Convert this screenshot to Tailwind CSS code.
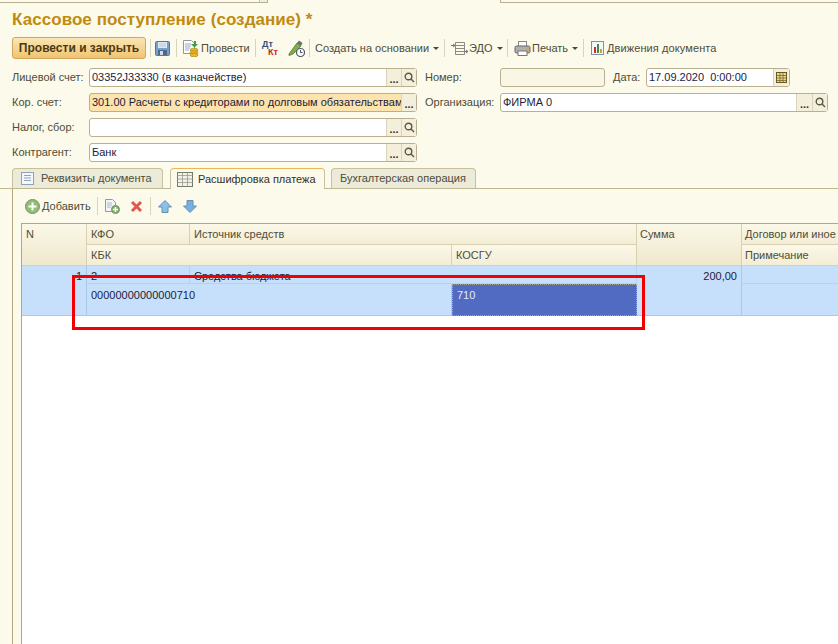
<!DOCTYPE html>
<html lang="ru">
<head>
  <meta charset="UTF-8" />
  <title>Кассовое поступление</title>
  <script src="https://cdn.jsdelivr.net/npm/@tailwindcss/browser@4"></script>
</head>
<body class="bg-[#fcfaea] h-[644px] w-[838px] overflow-hidden relative font-['Liberation_Sans',Arial,sans-serif] text-[11px] text-[#4f4c38]">

  <!-- Top strip -->
  <div class="h-[12px] flex">
    <div class="w-[268px] h-[3px] border-b border-r border-[#b8b090] flex justify-end">
      <div class="w-[8px] h-[2px] border-l border-[#c8c4ac] bg-[#f0eedd]"></div>
    </div>
    <div class="w-[232px]"></div>
    <div class="flex-1 h-[3px] border-b border-l border-[#b8b090]"></div>
  </div>

  <!-- Title -->
  <h1 class="pl-[12px] h-[24px] leading-[16px] text-[17px] tracking-[0.06px] font-bold text-[#c08a10]">Кассовое поступление (создание) *</h1>

  <!-- Command bar -->
  <div class="h-[24px] pl-[12px] flex items-center whitespace-nowrap">
    <button class="h-[22px] w-[134px] rounded-[3px] border border-[#d2a860] bg-gradient-to-b from-[#fbe6b4] to-[#f0c470] font-bold text-[12px] text-[#4b3a10]">Провести и закрыть</button>
    <div class="w-px h-[18px] bg-[#d8d4bc] ml-[4px] mr-[4px]"></div>
    <svg class="w-[15px] h-[15px]" viewBox="0 0 15 15"><rect x=".5" y=".5" width="14" height="14" rx="1" fill="#7b9fc8" stroke="#56789c"/><rect x="3" y="1" width="9" height="6" fill="#dfe8f2"/><path d="M4 3h7M4 5h7" stroke="#a9bdd2" stroke-width=".7"/><rect x="3" y="9" width="9" height="5" fill="#4a6a8a"/><rect x="5" y="10" width="3" height="4" fill="#cfdbe8"/></svg>
    <div class="w-px h-[18px] bg-[#d8d4bc] ml-[6px] mr-[6px]"></div>
    <svg class="w-[16px] h-[17px]" viewBox="0 0 16 17"><path d="M.5.5h8l3 3v10h-11z" fill="#fff" stroke="#8a9aa8"/><path d="M2 4h6M2 6h6M2 8h5M2 10h4" stroke="#9ab"/><path d="M8 4h3V1h2v3h2l-3.500 3.500z" fill="#3f9e3f"/><ellipse cx="11" cy="10" rx="4" ry="1.800" fill="#e8b82a" stroke="#a67c10" stroke-width=".6"/><ellipse cx="11" cy="12.500" rx="4" ry="1.800" fill="#e8b82a" stroke="#a67c10" stroke-width=".6"/><ellipse cx="11" cy="15" rx="4" ry="1.800" fill="#e8b82a" stroke="#a67c10" stroke-width=".6"/></svg>
    <span class="ml-[2px] w-[49px]">Провести</span>
    <div class="w-px h-[18px] bg-[#d8d4bc] ml-[5px] mr-[6px]"></div>
    <div class="w-[17px] h-[17px] relative font-bold text-[9px] leading-[9px]">
      <span class="absolute left-0 top-0 text-[#33517a]">Дт</span>
      <span class="absolute left-[6px] top-[8px] text-[#d01818]">Кт</span>
    </div>
    <svg class="w-[17px] h-[17px] ml-[9px]" viewBox="0 0 17 17"><path d="M1 14 9 3l4 3-8 8-4 1.500z" fill="#7fae4e" stroke="#4f7432" stroke-width=".8"/><path d="M9 3l2-2.500 3.500 2.500-1.500 3z" fill="#6e6e6e"/><circle cx="12.500" cy="12.500" r="4" fill="#fff" stroke="#4e5a66" stroke-width="1.200"/><path d="M12.500 10v2.500h2" fill="none" stroke="#33404a" stroke-width=".9"/></svg>
    <div class="w-px h-[18px] bg-[#d8d4bc] ml-[4px] mr-[5px]"></div>
    <span class="w-[113px]">Создать на основании</span>
    <span class="w-0 h-0 ml-[5px] border-x-[3px] border-t-[3px] border-x-transparent border-t-[#4a4a3a]"></span>
    <div class="w-px h-[18px] bg-[#d8d4bc] ml-[5px] mr-[6px]"></div>
    <svg class="w-[17px] h-[15px]" viewBox="0 0 17 15" fill="none" stroke="#8a8a80"><path d="M4.500 1.500h9v12h-9zM4.500 4.500h9M4.500 7.500h9M4.500 10.500h9"/><path d="M0 4.500h4M2 3l2 1.500L2 6M13 10.500h4M15 9l2 1.500-2 1.500" stroke="#777"/></svg>
    <span class="ml-[1px] w-[24px]">ЭДО</span>
    <span class="w-0 h-0 ml-[4px] border-x-[3px] border-t-[3px] border-x-transparent border-t-[#4a4a3a]"></span>
    <div class="w-px h-[18px] bg-[#d8d4bc] ml-[4px] mr-[6px]"></div>
    <svg class="w-[17px] h-[15px]" viewBox="0 0 16 15"><rect x="4" y=".5" width="8" height="5" fill="#fff" stroke="#888"/><rect x=".5" y="5" width="15" height="7" rx="1.500" fill="#b0b0ac" stroke="#666"/><rect x="3.500" y="10" width="9" height="4.500" fill="#fff" stroke="#777"/><rect x="12" y="6.500" width="2" height="1.500" fill="#e8a030"/></svg>
    <span class="ml-[1px] w-[38px]">Печать</span>
    <span class="w-0 h-0 ml-[2px] border-x-[3px] border-t-[3px] border-x-transparent border-t-[#4a4a3a]"></span>
    <div class="w-px h-[18px] bg-[#d8d4bc] ml-[5px] mr-[7px]"></div>
    <svg class="w-[13px] h-[14px]" viewBox="0 0 13 14"><rect x=".5" y=".5" width="12" height="13" fill="#f4f7fb" stroke="#7d93ad"/><rect x="3" y="6" width="2" height="6" fill="#c83030"/><rect x="6" y="3" width="2" height="9" fill="#3f8f3f"/><rect x="9" y="8" width="2" height="4" fill="#d9a020"/></svg>
    <span class="ml-[3px] tracking-[0.1px]">Движения документа</span>
  </div>

  <!-- Form -->
  <div class="mt-[8px] pl-[12px] grid grid-cols-[77px_328px_83px_1fr] gap-y-[6px] h-[94px] whitespace-nowrap">
    <div class="h-[19px] leading-[19px]">Лицевой счет:</div>
    <div class="h-[19px] rounded-[3px] border border-[#b8b090] bg-white flex">
      <div class="flex-1 pl-[2px] leading-[17px] text-[#1c1c3a]">03352J33330 (в казначействе)</div>
      <div class="w-[15px] border-l border-[#d8d4bc] bg-[#f3efdb] text-center text-[#333] leading-[20px] font-bold">...</div>
      <div class="w-[15px] border-l border-[#d8d4bc] bg-[#f3efdb] flex items-center justify-center">
        <svg class="w-[11px] h-[11px]" viewBox="0 0 11 11" fill="none" stroke="#5a5a48" stroke-width="1.400"><circle cx="4.500" cy="4.500" r="3.300"/><path d="M7 7l3 3"/></svg>
      </div>
    </div>
    <div class="h-[19px] leading-[19px] pl-[8px]">Номер:</div>
    <div class="flex items-start">
      <div class="w-[105px] h-[19px] rounded-[3px] border border-[#b8b090] bg-[#f9f7e4]"></div>
      <div class="w-[41px] pl-[8px] leading-[19px]">Дата:</div>
      <div class="w-[144px] h-[19px] rounded-[3px] border border-[#b8b090] bg-white flex">
        <div class="flex-1 pl-[2px] leading-[17px] text-[#1c1c3a]">17.09.2020 &nbsp;0:00:00</div>
        <div class="w-[16px] border-l border-[#d8d4bc] bg-[#f3efdb] flex items-center justify-center">
          <svg class="w-[11px] h-[11px]" viewBox="0 0 11 11"><rect x=".5" y=".5" width="10" height="10" fill="#e8d890" stroke="#6a5a20"/><path d="M.5 3.500h10M.5 6h10M.5 8.500h10M4 .5v10M7 .5v10" stroke="#6a5a20" stroke-width=".7"/></svg>
        </div>
      </div>
    </div>

    <div class="h-[19px] leading-[19px]">Кор. счет:</div>
    <div class="h-[19px] rounded-[3px] border border-[#b8b090] bg-[#fde3ae] flex">
      <div class="flex-1 pl-[2px] leading-[17px] text-[#1c1c3a] overflow-hidden">301.00 Расчеты с кредиторами по долговым обязательствам</div>
      <div class="w-[15px] border-l border-[#d8d4bc] bg-[#f3efdb] text-center text-[#333] leading-[20px] font-bold">...</div>
    </div>
    <div class="h-[19px] leading-[19px] pl-[8px]">Организация:</div>
    <div class="w-[328px] h-[19px] rounded-[3px] border border-[#b8b090] bg-white flex">
      <div class="flex-1 pl-[2px] leading-[17px] text-[#1c1c3a]">ФИРМА 0</div>
      <div class="w-[16px] border-l border-[#d8d4bc] bg-[#f3efdb] text-center text-[#333] leading-[20px] font-bold">...</div>
      <div class="w-[15px] border-l border-[#d8d4bc] bg-[#f3efdb] flex items-center justify-center">
        <svg class="w-[11px] h-[11px]" viewBox="0 0 11 11" fill="none" stroke="#5a5a48" stroke-width="1.400"><circle cx="4.500" cy="4.500" r="3.300"/><path d="M7 7l3 3"/></svg>
      </div>
    </div>

    <div class="h-[19px] leading-[19px]">Налог, сбор:</div>
    <div class="h-[19px] rounded-[3px] border border-[#b8b090] bg-white flex">
      <div class="flex-1"></div>
      <div class="w-[15px] border-l border-[#d8d4bc] bg-[#f3efdb] text-center text-[#333] leading-[20px] font-bold">...</div>
      <div class="w-[15px] border-l border-[#d8d4bc] bg-[#f3efdb] flex items-center justify-center">
        <svg class="w-[11px] h-[11px]" viewBox="0 0 11 11" fill="none" stroke="#5a5a48" stroke-width="1.400"><circle cx="4.500" cy="4.500" r="3.300"/><path d="M7 7l3 3"/></svg>
      </div>
    </div>
    <div class="col-span-2"></div>

    <div class="h-[19px] leading-[19px]">Контрагент:</div>
    <div class="h-[19px] rounded-[3px] border border-[#b8b090] bg-white flex">
      <div class="flex-1 pl-[2px] leading-[17px] text-[#1c1c3a]">Банк</div>
      <div class="w-[15px] border-l border-[#d8d4bc] bg-[#f3efdb] text-center text-[#333] leading-[20px] font-bold">...</div>
      <div class="w-[15px] border-l border-[#d8d4bc] bg-[#f3efdb] flex items-center justify-center">
        <svg class="w-[11px] h-[11px]" viewBox="0 0 11 11" fill="none" stroke="#5a5a48" stroke-width="1.400"><circle cx="4.500" cy="4.500" r="3.300"/><path d="M7 7l3 3"/></svg>
      </div>
    </div>
    <div class="col-span-2"></div>
  </div>

  <!-- Tabs -->
  <div class="mt-[6px] pl-[12px] h-[21px] flex items-end border-b border-[#c0b890] whitespace-nowrap">
    <div class="w-[151px] h-[20px] rounded-t-[4px] border border-b-0 border-[#c8c09c] bg-[#ecead8] flex items-center pl-[8px]">
      <svg class="w-[13px] h-[13px]" viewBox="0 0 13 13"><rect x=".5" y=".5" width="12" height="12" fill="#f4f7fb" stroke="#8fa3b8"/><path d="M3 3.500h7M3 6h7M3 8.500h7" stroke="#8fa3b8"/></svg>
      <span class="ml-[7px]">Реквизиты документа</span>
    </div>
    <div class="ml-[7px] w-[155px] h-[21px] -mb-px rounded-t-[4px] border border-b-0 border-[#c8c09c] border-t-[#e8b858] bg-[#fcfaea] flex items-center pl-[6px] text-[#33322a]">
      <svg class="w-[16px] h-[15px]" viewBox="0 0 16 15"><rect x=".5" y=".5" width="15" height="14" fill="#f2f2ea" stroke="#77776a"/><path d="M.5 3.500h15M5.500.5v14M10.500.5v14M.5 7h15M.5 10.500h15" stroke="#9a9a8c" stroke-width=".8"/></svg>
      <span class="ml-[5px]">Расшифровка платежа</span>
    </div>
    <div class="ml-[6px] w-[145px] h-[20px] rounded-t-[4px] border border-b-0 border-[#c8c09c] bg-[#ecead8] flex items-center pl-[8px]">Бухгалтерская операция</div>
  </div>

  <!-- Tab panel -->
  <div class="ml-[12px] h-[456px] border-l border-[#b0a880]">
    <div class="h-[34px] pl-[12px] flex items-center">
      <svg class="w-[15px] h-[15px]" viewBox="0 0 15 15"><circle cx="7.500" cy="7.500" r="7" fill="#8fc070" stroke="#808a78"/><path d="M7.500 3.500v8M3.500 7.500h8" stroke="#fff" stroke-width="2"/></svg>
      <span class="ml-[2px]">Добавить</span>
      <div class="w-px h-[18px] bg-[#d8d4bc] ml-[6px] mr-[7px]"></div>
      <svg class="w-[15px] h-[15px]" viewBox="0 0 15 15"><path d="M.5.5h7l3 3v9h-10z" fill="#f2f6fa" stroke="#8a9aa8"/><path d="M2 4h5M2 6h5M2 8h4" stroke="#a9b8c6"/><circle cx="10.500" cy="10.500" r="4" fill="#7db562" stroke="#7d8a78"/><path d="M10.500 8v5M8 10.500h5" stroke="#fff" stroke-width="1.400"/></svg>
      <svg class="w-[13px] h-[13px] ml-[10px]" viewBox="0 0 13 13"><path d="M2 2l9 9M11 2l-9 9" stroke="#e0584c" stroke-width="3"/></svg>
      <div class="w-px h-[18px] bg-[#d8d4bc] ml-[7px] mr-[7px]"></div>
      <svg class="w-[14px] h-[13px]" viewBox="0 0 14 13"><path d="M7 .5 13.500 7H10v5.500H4V7H.5z" fill="#8cc0ea" stroke="#6690b0"/></svg>
      <svg class="w-[14px] h-[13px] ml-[11px]" viewBox="0 0 14 13"><path d="M7 12.500 13.500 6H10V.5H4V6H.5z" fill="#78aee0" stroke="#6690b0"/></svg>
    </div>

    <!-- Table -->
    <div class="ml-[8px] h-[421px] border-l border-t border-[#b0a880] bg-white relative">
      <div class="grid grid-cols-[65px_103px_262px_185px_105px_96px] grid-rows-[21px_21px_18px_32px] whitespace-nowrap">
        <div class="row-span-2 px-[4px] pt-[2px] border-r border-b border-[#d8d0b0] bg-gradient-to-b from-[#fbf8e8] to-[#efe8cc]">N</div>
        <div class="px-[4px] pt-[2px] border-r border-b border-[#d8d0b0] bg-gradient-to-b from-[#fbf8e8] to-[#f3edd5]">КФО</div>
        <div class="col-span-2 px-[4px] pt-[2px] border-r border-b border-[#d8d0b0] bg-gradient-to-b from-[#fbf8e8] to-[#f3edd5]">Источник средств</div>
        <div class="row-span-2 px-[3px] pt-[2px] border-r border-b border-[#d8d0b0] bg-gradient-to-b from-[#fbf8e8] to-[#efe8cc]">Сумма</div>
        <div class="px-[3px] pt-[2px] border-b border-[#d8d0b0] bg-gradient-to-b from-[#fbf8e8] to-[#f3edd5] overflow-hidden">Договор или иное</div>
        <div class="col-span-2 px-[4px] pt-[2px] border-r border-b border-[#d8d0b0] bg-gradient-to-b from-[#fbf8e8] to-[#f3edd5]">КБК</div>
        <div class="px-[4px] pt-[2px] border-r border-b border-[#d8d0b0] bg-gradient-to-b from-[#fbf8e8] to-[#f3edd5]">КОСГУ</div>
        <div class="px-[3px] pt-[2px] border-b border-[#d8d0b0] bg-gradient-to-b from-[#fbf8e8] to-[#f3edd5]">Примечание</div>

        <div class="row-span-2 pr-[4px] pt-[2px] text-right bg-[#c6e0fc] border-r border-b border-[#a9c9e8] text-[#1c1c3a]">1</div>
        <div class="px-[4px] pt-[2px] bg-[#c6e0fc] border-r border-b border-[#b4d2f0] text-[#1c1c3a]">2</div>
        <div class="col-span-2 px-[4px] pt-[2px] bg-[#c6e0fc] border-r border-b border-[#b4d2f0] text-[#1c1c3a]">Средства бюджета</div>
        <div class="row-span-2 pr-[4px] pt-[2px] text-right bg-[#c6e0fc] border-r border-b border-[#a9c9e8] text-[#1c1c3a]">200,00</div>
        <div class="bg-[#c6e0fc] border-b border-[#b4d2f0]"></div>
        <div class="col-span-2 px-[4px] pt-[3px] bg-[#c6e0fc] border-r border-b border-[#a9c9e8] text-[#1c1c3a]">00000000000000710</div>
        <div class="px-[4px] pt-[2px] bg-[#516bc2] border border-dotted border-[#a8a890] text-[#e4e8f6]">710</div>
        <div class="bg-[#c6e0fc] border-b border-[#a9c9e8]"></div>
      </div>
    </div>
  </div>

  <!-- Red annotation frame -->
  <div class="absolute left-[72px] top-[275px] w-[573px] h-[55px] border-[3px] border-[#f00000]"></div>
</body>
</html>
